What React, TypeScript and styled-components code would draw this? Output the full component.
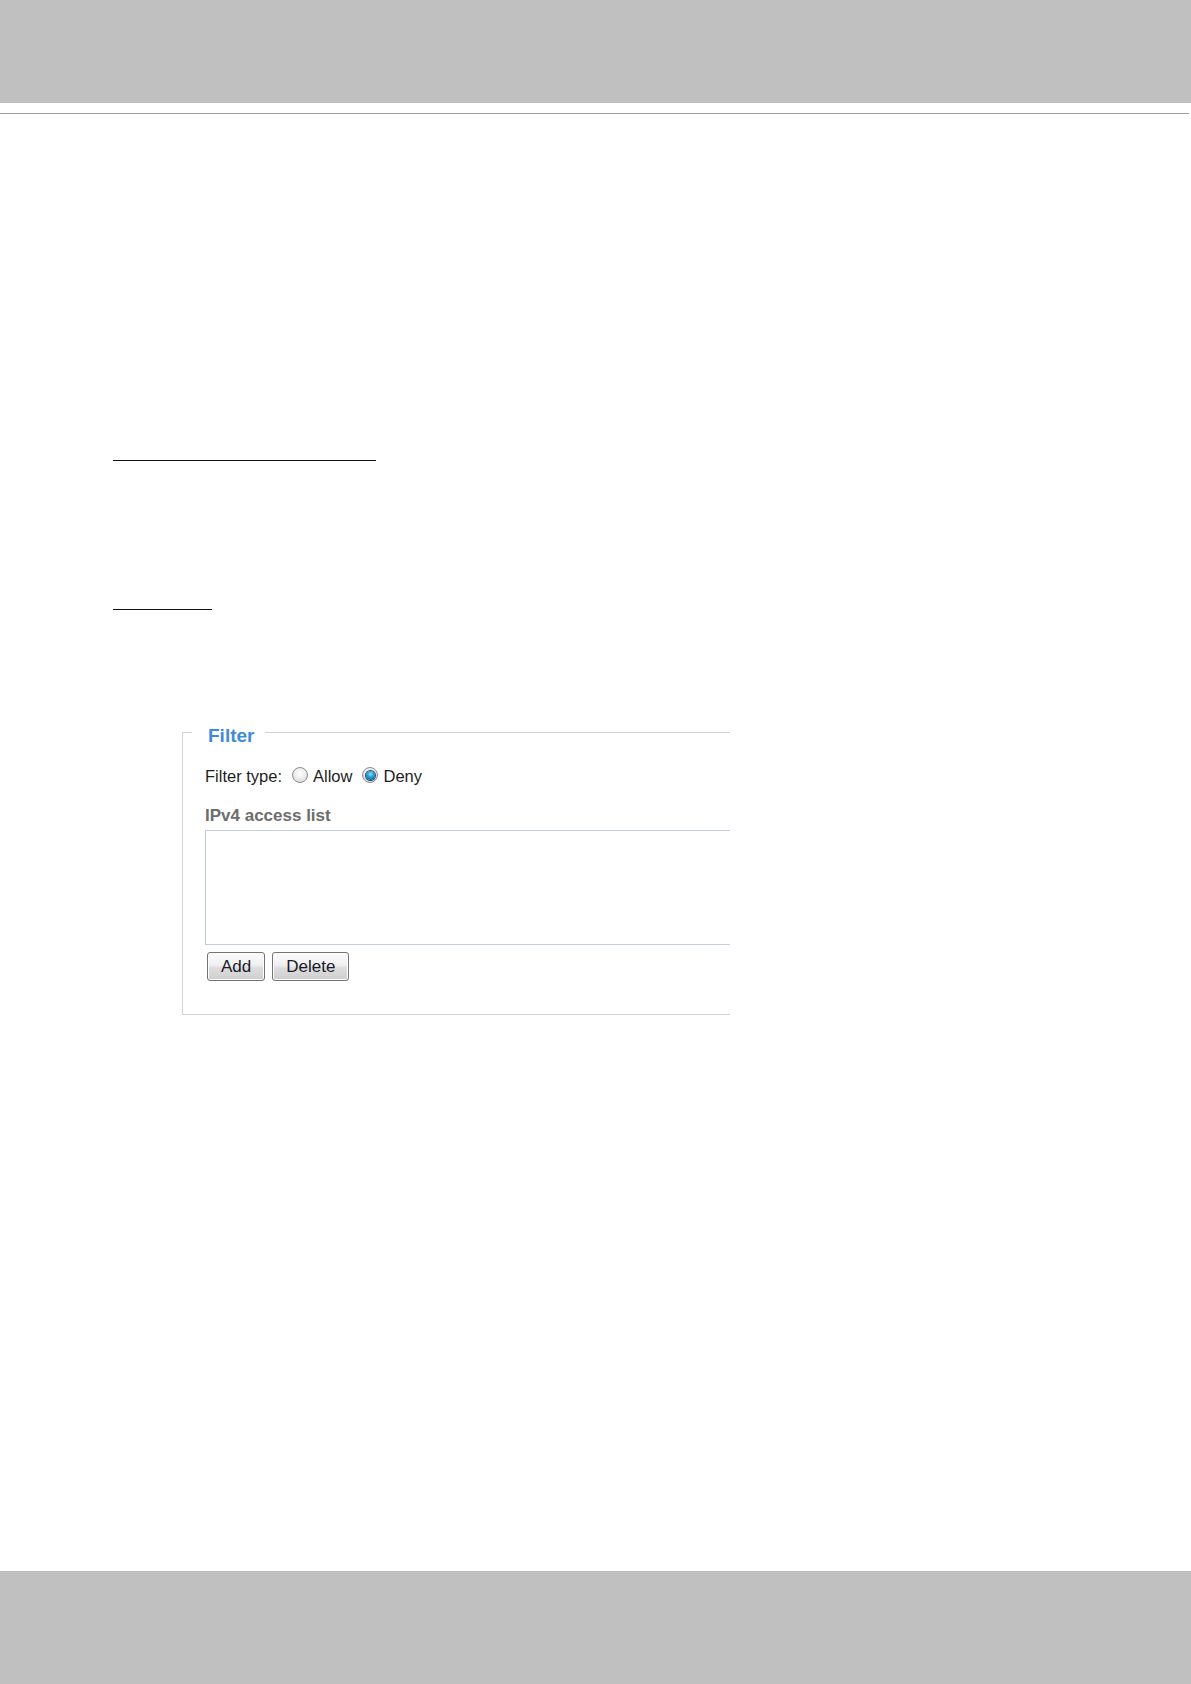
import React from 'react';
import styled, { createGlobalStyle } from 'styled-components';

const GlobalStyle = createGlobalStyle`
    html, body {
        margin: 0;
        padding: 0;
        background: #ffffff;
    }
    body {
        font-family: 'Liberation Sans', Arial, sans-serif;
    }
`;

const App: React.FC = () => {
    return (
        <Page>
            <GlobalStyle />
            <TopBand />
            <TopRule />
            <Content>
                <BlankLine $width={263} $gap={346} />
                <BlankLine $width={99} $gap={148} />
                <FilterClip>
                    <FilterSet>
                        <Legend>Filter</Legend>
                        <TypeRow>
                            <span>Filter type:</span>
                            <Choice>
                                <Radio type="radio" name="filterType" readOnly />
                                Allow
                            </Choice>
                            <Choice>
                                <Radio type="radio" name="filterType" defaultChecked />
                                Deny
                            </Choice>
                        </TypeRow>
                        <ListLabel>IPv4 access list</ListLabel>
                        <AccessList />
                        <ButtonRow>
                            <Button type="button">Add</Button>
                            <Button type="button">Delete</Button>
                        </ButtonRow>
                    </FilterSet>
                </FilterClip>
            </Content>
            <BottomBand />
        </Page>
    );
};

export default App;

const Page = styled.div`
    display: flex;
    flex-direction: column;
    min-height: 1684px;
    width: 1191px;
`;

const TopBand = styled.div`
    height: 103px;
    background: #bfc0bf;
`;

const TopRule = styled.div`
    margin-top: 10px;
    width: 1189px;
    height: 1px;
    background: #9c9c9c;
`;

const Content = styled.main`
    display: flex;
    flex-direction: column;
    align-items: flex-start;
    padding-left: 113px;
`;

const BlankLine = styled.div<{ $width: number; $gap: number }>`
    width: ${(p) => p.$width}px;
    margin-top: ${(p) => p.$gap}px;
    border-top: 1px solid #111;
`;

const FilterClip = styled.div`
    margin-top: 109px;
    margin-left: 69px;
    width: 548px;
    overflow: hidden;
`;

const FilterSet = styled.fieldset`
    width: 760px;
    margin: 0;
    padding: 21px 0 33px 22px;
    border: 1px solid #d6d3cc;
    display: flex;
    flex-direction: column;
    align-items: flex-start;
`;

const Legend = styled.legend`
    margin-left: -13px;
    padding: 8px 11px 0 16px;
    font-size: 19px;
    line-height: 18px;
    font-weight: bold;
    color: #3f8ade;
`;

const TypeRow = styled.div`
    display: flex;
    align-items: center;
    gap: 10px;
    font-size: 16.5px;
    line-height: 20px;
    color: #1e1e1e;
`;

const Choice = styled.label`
    display: flex;
    align-items: center;
    gap: 5px;
`;

const Radio = styled.input`
    appearance: none;
    margin: 0 0 2px 0;
    width: 16px;
    height: 16px;
    border-radius: 50%;
    border: 1px solid #8d9090;
    background: radial-gradient(circle at 50% 40%, #ffffff 0%, #eeeeee 45%, #cfd0d0 100%);
    box-sizing: border-box;
    position: relative;
    &:checked::after {
        content: '';
        position: absolute;
        left: 2.5px;
        top: 2.5px;
        width: 9px;
        height: 9px;
        border-radius: 50%;
        background: radial-gradient(circle at 50% 35%, #8fe0ff 0%, #1f9ad6 45%, #0c4f7a 100%);
        box-shadow: 0 0 0 1px #2a4d66;
    }
`;

const ListLabel = styled.div`
    margin-top: 20px;
    font-size: 17px;
    line-height: 20px;
    font-weight: bold;
    color: #6d6d6d;
`;

const AccessList = styled.div`
    margin-top: 4px;
    width: 100%;
    height: 115px;
    box-sizing: border-box;
    border: 1px solid #c3cddd;
    background: #ffffff;
`;

const ButtonRow = styled.div`
    display: flex;
    gap: 7px;
    margin: 7px 0 0 2px;
`;

const Button = styled.button`
    height: 29px;
    padding: 0 13px;
    font-family: 'Liberation Sans', Arial, sans-serif;
    font-size: 17px;
    color: #1a1a2a;
    border: 1px solid #747474;
    border-radius: 3px;
    background: linear-gradient(#fbfbfb 0%, #f0f0f0 45%, #dddddd 55%, #cfcfcf 100%);
    box-shadow: inset 0 0 0 1px #fdfdfd;
`;

const BottomBand = styled.div`
    margin-top: auto;
    height: 113px;
    background: #bfc0bf;
`;
